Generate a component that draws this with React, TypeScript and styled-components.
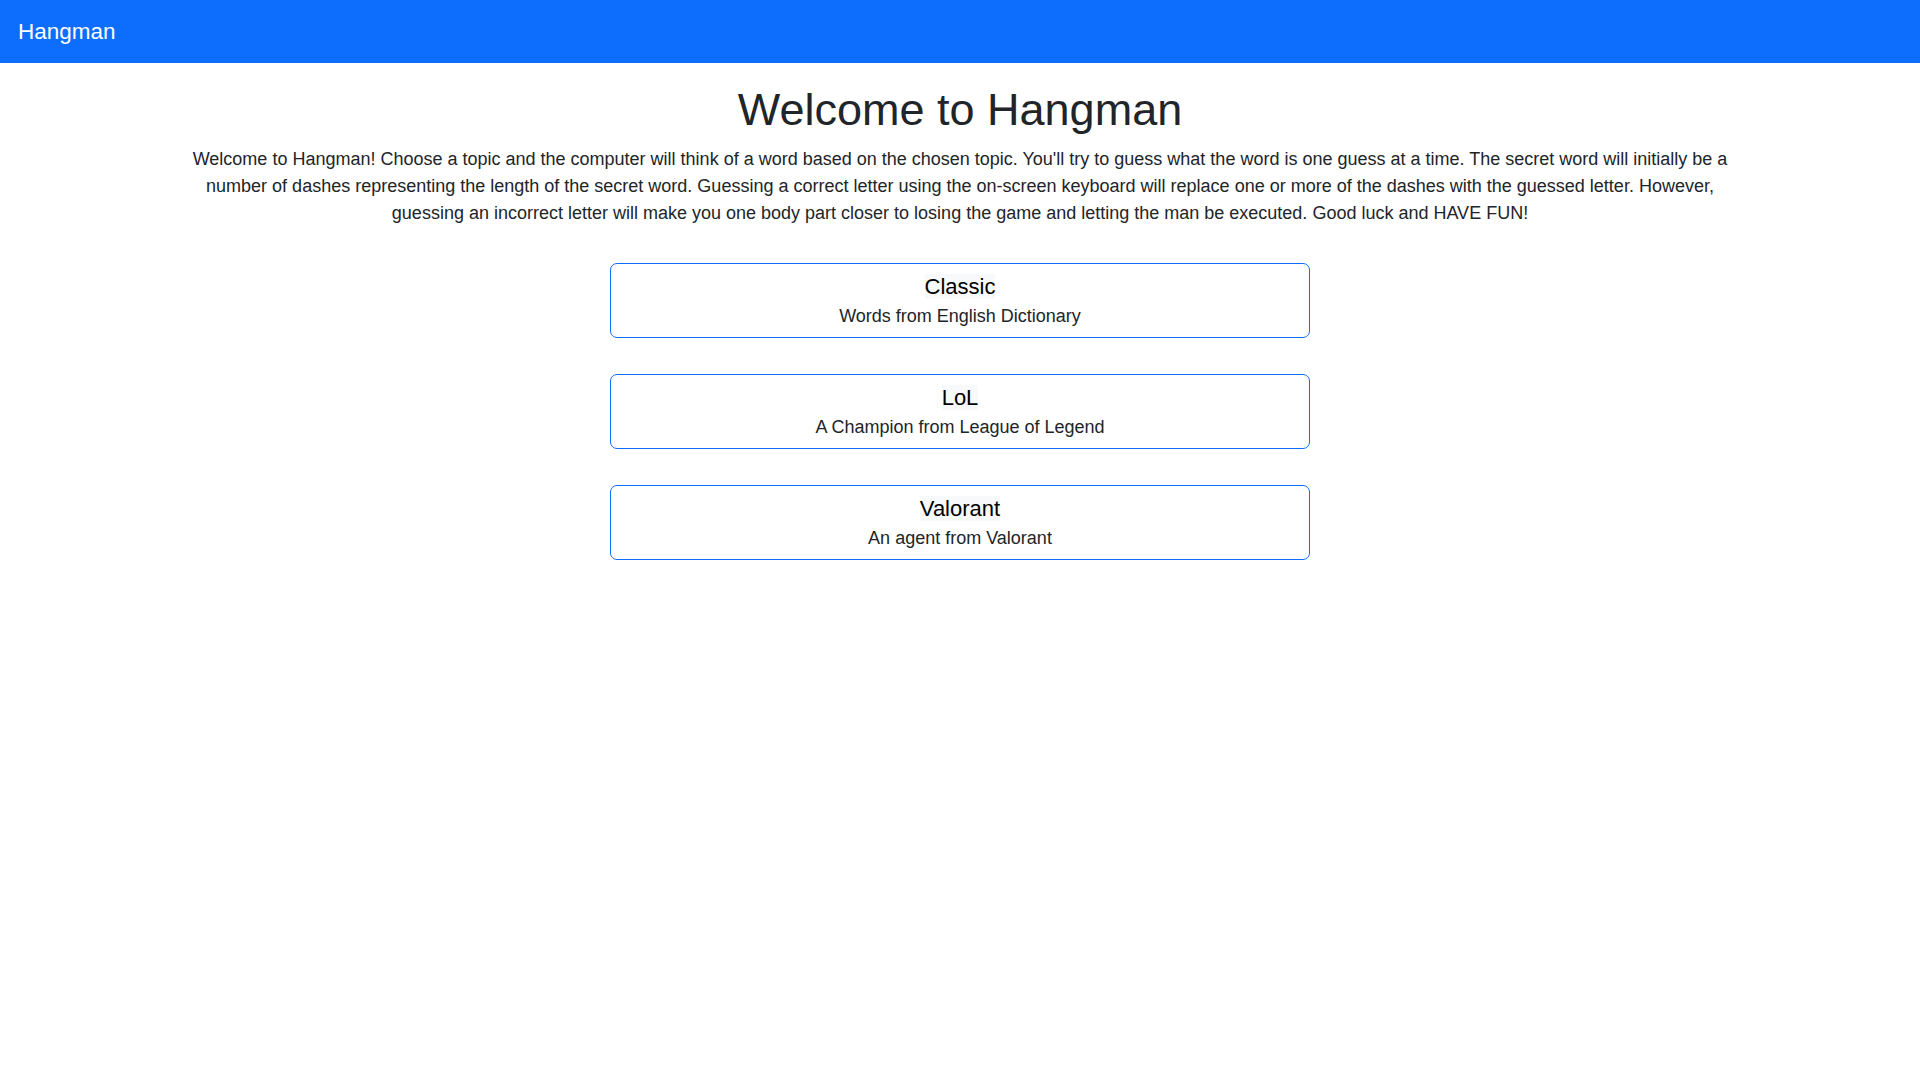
import React from 'react';
import styled, { createGlobalStyle } from 'styled-components';

const GlobalStyle = createGlobalStyle`
    html, body {
        margin: 0;
        padding: 0;
        background: #ffffff;
    }

    body {
        font-family: 'Liberation Sans', Arial, sans-serif;
        font-size: 18px;
        line-height: 27px;
        color: #212529;
    }

    * {
        box-sizing: border-box;
    }
`;

const NavBar = styled.nav`
    background: #0d6efd;
    height: 63px;
    display: flex;
    align-items: center;
    padding: 0 18px;
`;

const Brand = styled.a`
    color: #ffffff;
    font-size: 22.5px;
    line-height: 33.75px;
    text-decoration: none;
    cursor: pointer;
`;

const Main = styled.main`
    display: flex;
    flex-direction: column;
    align-items: center;
    padding-top: 20px;
`;

const Title = styled.h1`
    margin: 0 0 9px;
    font-size: 45px;
    line-height: 54px;
    font-weight: 400;
    color: #212529;
    text-align: center;
`;

const Intro = styled.p`
    width: 1560px;
    margin: 0 0 36px;
    text-align: center;
`;

const TopicList = styled.div`
    display: flex;
    flex-direction: column;
    gap: 36px;
    width: 700px;
`;

const TopicButton = styled.button`
    display: flex;
    flex-direction: column;
    align-items: center;
    width: 100%;
    height: 75px;
    padding: 6px 13.5px 0;
    background: #ffffff;
    border: 1px solid #0d6efd;
    border-radius: 7px;
    font-family: inherit;
    cursor: pointer;
    transition: background 0.15s ease;

    :hover {
        background: #f4f8ff;
    }
`;

const TopicName = styled.span`
    font-size: 22px;
    line-height: 33px;
    color: #000000;

    span {
        background: #f8f9fa;
    }
`;

const TopicDescription = styled.span`
    font-size: 18px;
    line-height: 27px;
    color: #212529;
`;

interface Topic {
    name: string;
    description: string;
}

const topics: Topic[] = [
    { name: 'Classic', description: 'Words from English Dictionary' },
    { name: 'LoL', description: 'A Champion from League of Legend' },
    { name: 'Valorant', description: 'An agent from Valorant' },
];

const App: React.FC = () => {
    return (
        <>
            <GlobalStyle />
            <NavBar>
                <Brand>Hangman</Brand>
            </NavBar>
            <Main>
                <Title>Welcome to Hangman</Title>
                <Intro>
                    Welcome to Hangman! Choose a topic and the computer will think of a word based on the chosen topic.
                    You'll try to guess what the word is one guess at a time. The secret word will initially be a number
                    of dashes representing the length of the secret word. Guessing a correct letter using the on-screen
                    keyboard will replace one or more of the dashes with the guessed letter. However, guessing an incorrect
                    letter will make you one body part closer to losing the game and letting the man be executed. Good luck
                    and HAVE FUN!
                </Intro>
                <TopicList>
                    {topics.map((topic) => (
                        <TopicButton key={topic.name}>
                            <TopicName>
                                <span>{topic.name}</span>
                            </TopicName>
                            <TopicDescription>{topic.description}</TopicDescription>
                        </TopicButton>
                    ))}
                </TopicList>
            </Main>
        </>
    );
};

export default App;
